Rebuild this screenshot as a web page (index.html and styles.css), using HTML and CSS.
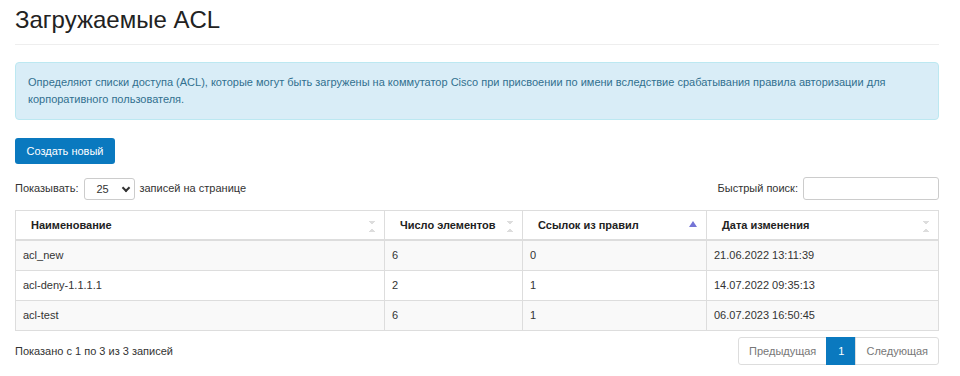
FILE: index.html
```html
<!DOCTYPE html>
<html lang="ru">
<head>
  <meta charset="UTF-8">
  <meta name="viewport" content="width=device-width, initial-scale=1">
  <title>Загружаемые ACL</title>
  <link rel="stylesheet" href="styles.css">
</head>
<body>

<div class="container">
  <h1>Загружаемые ACL</h1>
  <hr>

  <div class="alert">
    Определяют списки доступа (ACL), которые могут быть загружены на коммутатор Cisco при присвоении по имени вследствие срабатывания правила авторизации для корпоративного пользователя.
  </div>

  <button type="button" class="btn">Создать новый</button>

  <div class="controls">
    <label class="length">Показывать:
      <span class="select-wrap">
        <select>
          <option>10</option>
          <option selected>25</option>
          <option>50</option>
          <option>100</option>
        </select>
      </span>
      записей на странице
    </label>
    <label class="filter">Быстрый поиск: <input type="search"></label>
  </div>

  <table class="grid">
    <colgroup>
      <col style="width:369px">
      <col style="width:138px">
      <col style="width:184px">
      <col>
    </colgroup>
    <thead>
      <tr>
        <th class="sorting">Наименование</th>
        <th class="sorting">Число элементов</th>
        <th class="sorting-asc">Ссылок из правил</th>
        <th class="sorting">Дата изменения</th>
      </tr>
    </thead>
    <tbody>
      <tr><td>acl_new</td><td>6</td><td>0</td><td>21.06.2022 13:11:39</td></tr>
      <tr><td>acl-deny-1.1.1.1</td><td>2</td><td>1</td><td>14.07.2022 09:35:13</td></tr>
      <tr><td>acl-test</td><td>6</td><td>1</td><td>06.07.2023 16:50:45</td></tr>
    </tbody>
  </table>

  <div class="footer">
    <div class="info">Показано с 1 по 3 из 3 записей</div>
    <ul class="pagination">
      <li><a>Предыдущая</a></li>
      <li class="active"><a>1</a></li>
      <li><a>Следующая</a></li>
    </ul>
  </div>
</div>

</body>
</html>
```

FILE: styles.css
```css
body {
  margin: 0;
  font-family: "Liberation Sans", Arial, sans-serif;
  font-size: 11px;
  line-height: 17px;
  color: #333;
  background: #fff;
}
.container {
  padding: 0 21px 0 15px;
}
h1 {
  font-size: 24px;
  font-weight: normal;
  line-height: 26px;
  margin: 7px 0 11px;
  color: #222;
}
hr {
  border: none;
  border-top: 1px solid #eee;
  margin: 0 0 17px;
}
.alert {
  background: #d9edf7;
  border: 1px solid #bce8f1;
  border-radius: 4px;
  color: #31708f;
  padding: 11px 12px;
  margin-bottom: 18px;
}
.btn {
  display: block;
  font-family: inherit;
  font-size: 11px;
  line-height: 16px;
  padding: 5px 0;
  width: 100px;
  white-space: nowrap;
  color: #fff;
  background: #0a79bf;
  border: none;
  border-radius: 3px;
  cursor: pointer;
}
.controls {
  display: flex;
  justify-content: space-between;
  align-items: center;
  margin-top: 13px;
  height: 23px;
}
.controls label {
  display: flex;
  align-items: center;
}
.select-wrap {
  position: relative;
  margin: 0 4px 0 6px;
}
.select-wrap::after {
  content: "";
  position: absolute;
  right: 6px;
  top: 7px;
  width: 4px;
  height: 4px;
  border-right: 2px solid #333;
  border-bottom: 2px solid #333;
  transform: rotate(45deg);
  pointer-events: none;
}
.length select {
  appearance: none;
  -webkit-appearance: none;
  display: block;
  width: 51px;
  height: 22px;
  padding: 0 0 0 11px;
  font-family: inherit;
  font-size: 11px;
  color: #333;
  background: #fff;
  border: 1px solid #ccc;
  border-radius: 3px;
}
.filter input {
  width: 136px;
  height: 23px;
  box-sizing: border-box;
  margin-left: 5px;
  border: 1px solid #ccc;
  border-radius: 3px;
}
.grid {
  width: 100%;
  margin-top: 10px;
  border-collapse: collapse;
  table-layout: fixed;
}
.grid th,
.grid td {
  border: 1px solid #ddd;
  text-align: left;
  white-space: nowrap;
}
.grid th {
  position: relative;
  font-weight: bold;
  height: 28px;
  padding: 0 18px 0 15px;
  border-bottom: 2px solid #ddd;
  color: #222;
}
.grid td {
  height: 29px;
  padding: 0 7px;
}
.grid tbody tr:nth-child(odd) {
  background: #f9f9f9;
}
.sorting::after {
  content: "";
  position: absolute;
  right: 9px;
  top: 10px;
  width: 6px;
  height: 11px;
  background:
    linear-gradient(to top right, transparent 50%, #ddd 50%) 0 0 / 3px 4px no-repeat,
    linear-gradient(to top left, transparent 50%, #ddd 50%) 3px 0 / 3px 4px no-repeat,
    linear-gradient(to bottom right, transparent 50%, #ddd 50%) 0 7px / 3px 4px no-repeat,
    linear-gradient(to bottom left, transparent 50%, #ddd 50%) 3px 7px / 3px 4px no-repeat;
}
.sorting-asc::after {
  content: "";
  position: absolute;
  right: 9px;
  top: 10px;
  width: 0;
  height: 0;
  border-left: 4px solid transparent;
  border-right: 4px solid transparent;
  border-bottom: 6px solid #7474d6;
}
.footer {
  display: flex;
  justify-content: space-between;
  align-items: center;
  margin-top: 6px;
}
.pagination {
  display: flex;
  list-style: none;
  margin: 0;
  padding: 0;
}
.pagination a {
  display: block;
  padding: 5px 10px;
  line-height: 16px;
  color: #777;
  background: #fff;
  border: 1px solid #ddd;
  margin-left: -1px;
}
.pagination li:first-child a {
  border-radius: 3px 0 0 3px;
  margin-left: 0;
}
.pagination li:last-child a {
  border-radius: 0 3px 3px 0;
}
.pagination .active a {
  color: #fff;
  background: #0a79bf;
  border-color: #0a79bf;
  padding: 5px 11px;
}
```
